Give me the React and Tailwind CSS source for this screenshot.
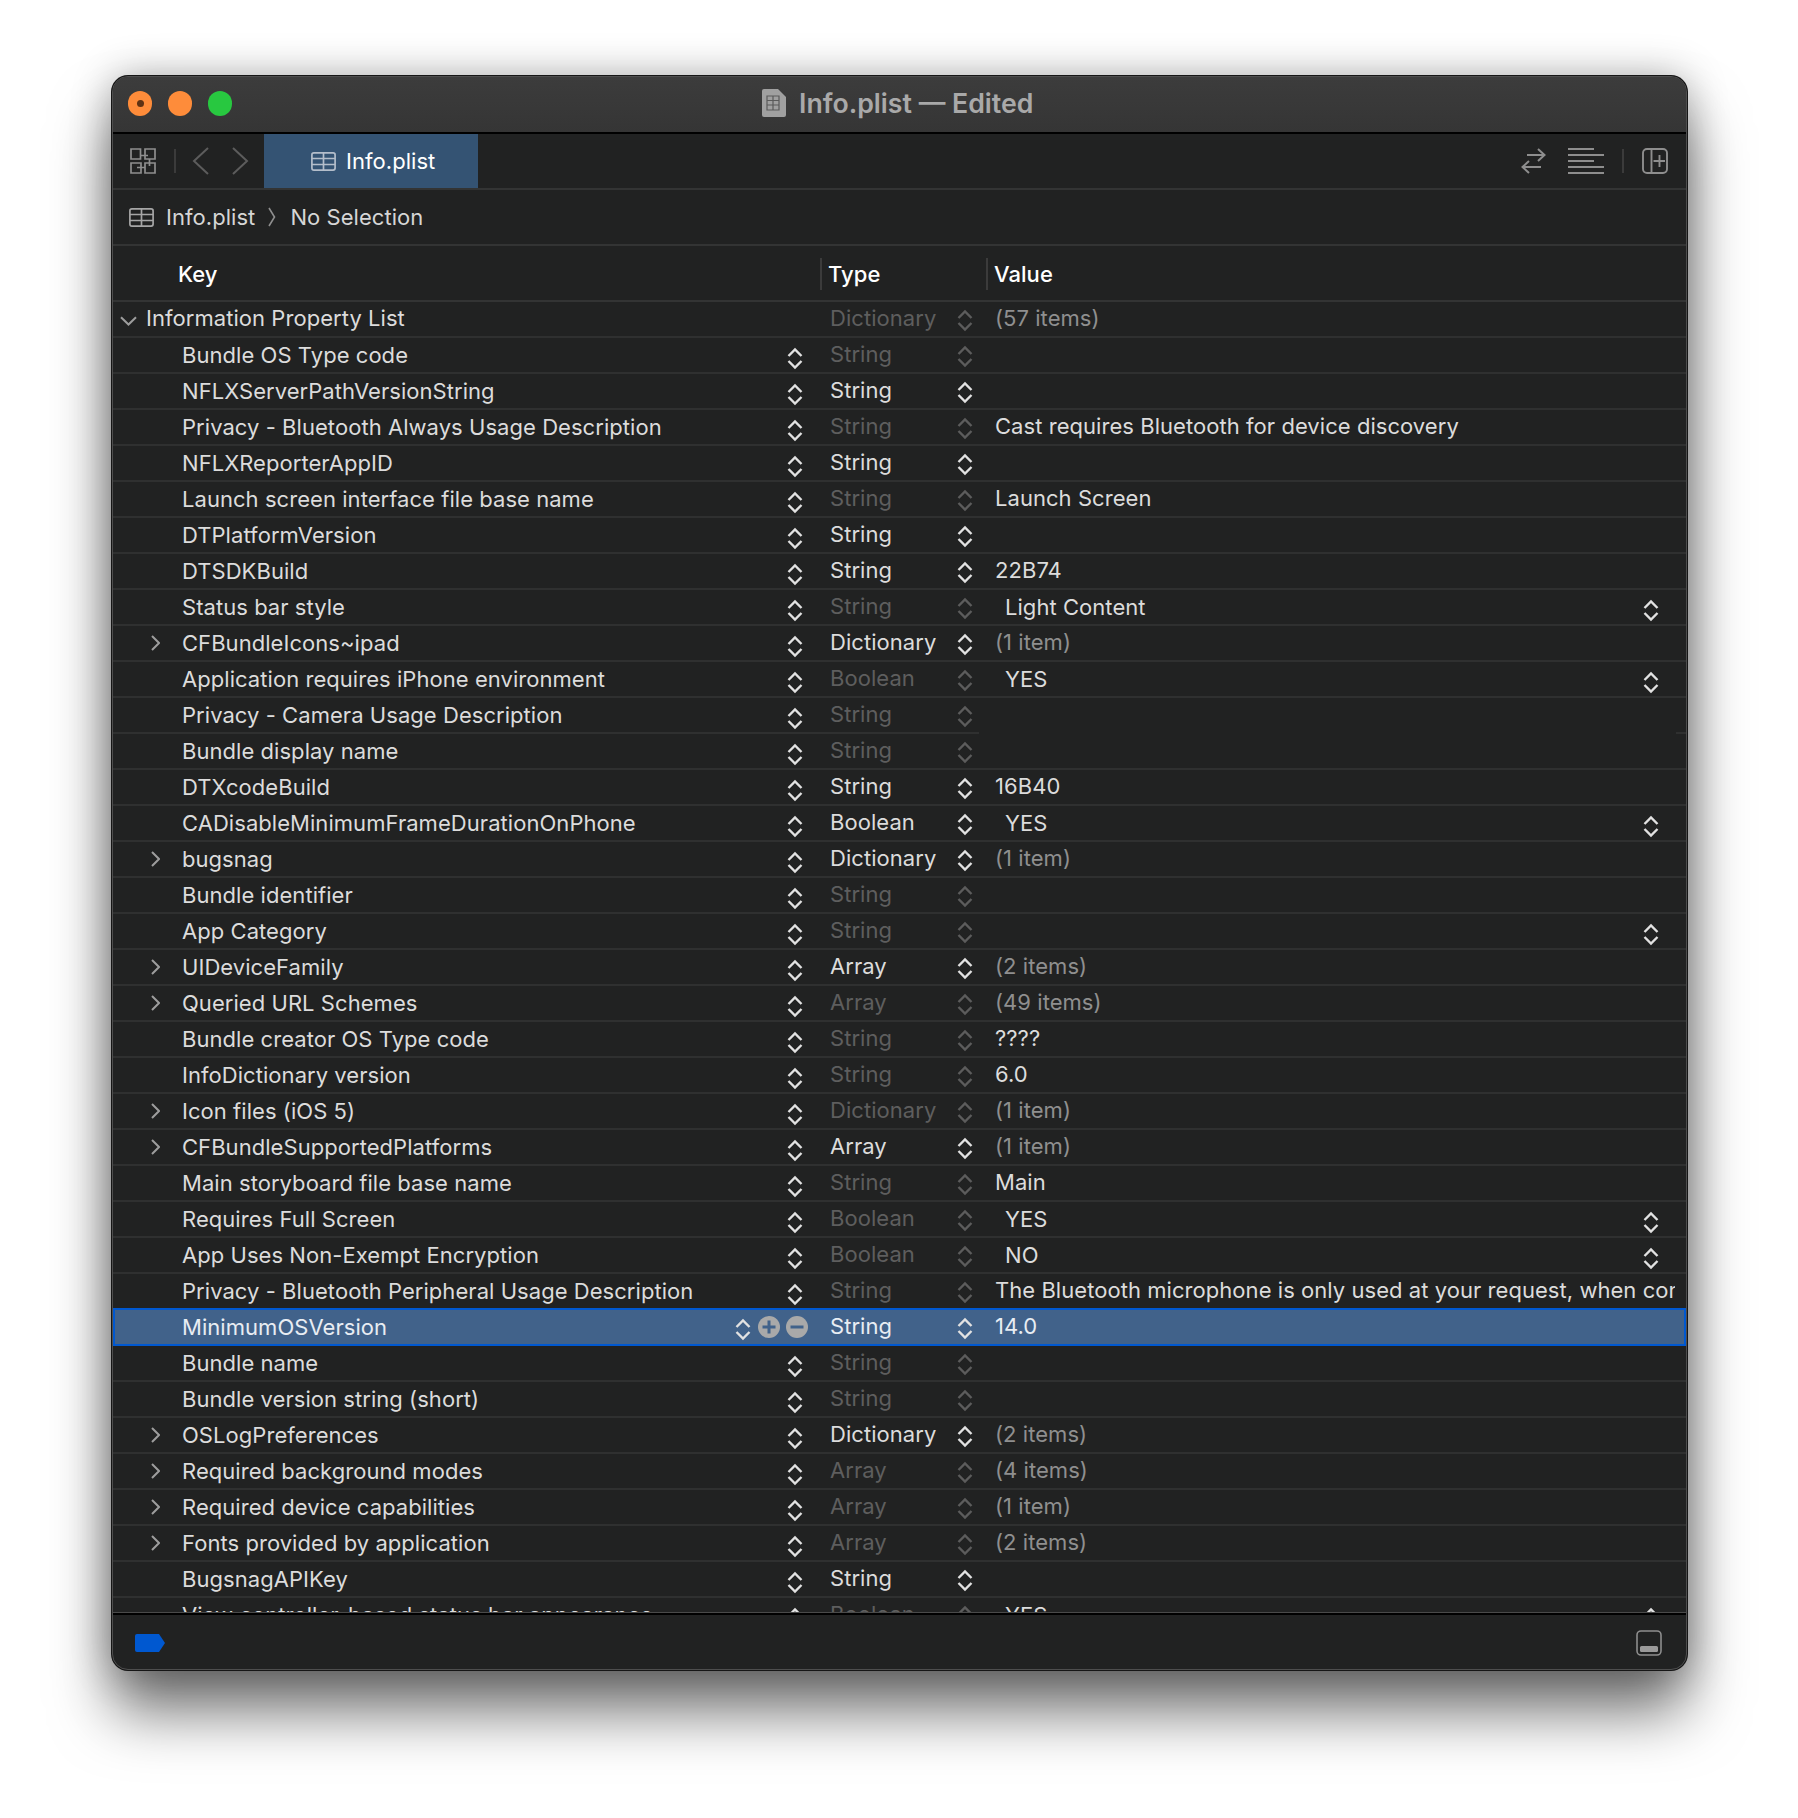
import React from "react";

const rows = [
  ["Information Property List", "Dictionary", 1, "(57 items)", "items", "root"],
  ["Bundle OS Type code", "String", 1],
  ["NFLXServerPathVersionString", "String", 0],
  ["Privacy - Bluetooth Always Usage Description", "String", 1, "Cast requires Bluetooth for device discovery"],
  ["NFLXReporterAppID", "String", 0],
  ["Launch screen interface file base name", "String", 1, "Launch Screen"],
  ["DTPlatformVersion", "String", 0],
  ["DTSDKBuild", "String", 0, "22B74"],
  ["Status bar style", "String", 1, "Light Content", "picker"],
  ["CFBundleIcons~ipad", "Dictionary", 0, "(1 item)", "items", "closed"],
  ["Application requires iPhone environment", "Boolean", 1, "YES", "picker"],
  ["Privacy - Camera Usage Description", "String", 1, "", "gap"],
  ["Bundle display name", "String", 1],
  ["DTXcodeBuild", "String", 0, "16B40"],
  ["CADisableMinimumFrameDurationOnPhone", "Boolean", 0, "YES", "picker"],
  ["bugsnag", "Dictionary", 0, "(1 item)", "items", "closed"],
  ["Bundle identifier", "String", 1],
  ["App Category", "String", 1, "", "picker"],
  ["UIDeviceFamily", "Array", 0, "(2 items)", "items", "closed"],
  ["Queried URL Schemes", "Array", 1, "(49 items)", "items", "closed"],
  ["Bundle creator OS Type code", "String", 1, "????"],
  ["InfoDictionary version", "String", 1, "6.0"],
  ["Icon files (iOS 5)", "Dictionary", 1, "(1 item)", "items", "closed"],
  ["CFBundleSupportedPlatforms", "Array", 0, "(1 item)", "items", "closed"],
  ["Main storyboard file base name", "String", 1, "Main"],
  ["Requires Full Screen", "Boolean", 1, "YES", "picker"],
  ["App Uses Non-Exempt Encryption", "Boolean", 1, "NO", "picker"],
  ["Privacy - Bluetooth Peripheral Usage Description", "String", 1, "The Bluetooth microphone is only used at your request, when connected to a device"],
  ["MinimumOSVersion", "String", 0, "14.0", "plain", "selected"],
  ["Bundle name", "String", 1],
  ["Bundle version string (short)", "String", 1],
  ["OSLogPreferences", "Dictionary", 0, "(2 items)", "items", "closed"],
  ["Required background modes", "Array", 1, "(4 items)", "items", "closed"],
  ["Required device capabilities", "Array", 1, "(1 item)", "items", "closed"],
  ["Fonts provided by application", "Array", 1, "(2 items)", "items", "closed"],
  ["BugsnagAPIKey", "String", 0],
  ["View controller-based status bar appearance", "Boolean", 1, "YES", "picker"],
];

function Stepper({ dim, className = "" }) {
  return (
    <svg width="16" height="23" viewBox="0 0 16 23" fill="none" stroke={dim ? "#5c5c5c" : "#e2e2e2"} strokeWidth="2.4" className={"shrink-0 " + className}>
      <path d="M1.5 9 L8 2.5 L14.5 9" />
      <path d="M1.5 14 L8 20.5 L14.5 14" />
    </svg>
  );
}

function TableIcon({ className = "", color = "#a6a6a6" }) {
  return (
    <svg width="25" height="19" viewBox="0 0 25 19" fill="none" stroke={color} strokeWidth="1.7" className={"shrink-0 " + className}>
      <rect x="0.9" y="0.9" width="23.2" height="17.2" rx="2" />
      <path d="M0.9 6.5 H24.1 M0.9 12.5 H24.1 M12.5 0.9 V18.1" />
    </svg>
  );
}

function Row({ r }) {
  const [key, type, dim, value, kind, mode] = r;
  const sel = mode === "selected";
  const gap = kind === "gap";
  const line = sel ? "" : "border-b-2 border-[#2f3030]";
  return (
    <div className={"flex shrink-0 " + (sel ? "h-[38px] -mt-[2px] border-2 border-[#0058d0] bg-[#41628a]" : "h-[36px]")}>
      <div className={"flex items-center shrink-0 " + (sel ? "w-[707px] " : "w-[709px] ") + line}>
        {mode === "root" ? (
          <div className="flex items-center pl-[7px] w-[33px] shrink-0">
            <svg width="17" height="10" viewBox="0 0 17 10" fill="none" stroke="#9d9d9d" strokeWidth="2" className="mt-[3px]">
              <path d="M1 1.2 L8.5 8.5 L16 1.2" />
            </svg>
          </div>
        ) : (
          <div className={"flex items-center justify-end pr-[22px] shrink-0 " + (sel ? "w-[67px]" : "w-[69px]")}>
            {mode === "closed" && (
              <svg width="9" height="16" viewBox="0 0 9 16" fill="none" stroke="#9d9d9d" strokeWidth="2">
                <path d="M1 1 L8 8 L1 15" />
              </svg>
            )}
          </div>
        )}
        <div className={"flex-1 whitespace-nowrap " + (mode === "root" ? "-mt-[2px] " : "") + (sel ? "text-[#e8edf3]" : "text-[#dcdcdc]")}>{key}</div>
        {sel ? (
          <div className="flex items-center pr-[14px]">
            <Stepper className="mt-[4px] mr-[7px]" />
            <svg width="22" height="22" viewBox="0 0 22 22" className="mr-[6px]">
              <circle cx="11" cy="11" r="11" fill="#a9a9a9" />
              <path d="M11 4.5 V17.5 M4.5 11 H17.5" stroke="#41628a" strokeWidth="3" />
            </svg>
            <svg width="22" height="22" viewBox="0 0 22 22">
              <circle cx="11" cy="11" r="11" fill="#a9a9a9" />
              <path d="M4.5 11 H17.5" stroke="#41628a" strokeWidth="3" />
            </svg>
          </div>
        ) : (
          mode !== "root" && <Stepper className="mt-[6px] mr-[19px]" />
        )}
      </div>
      <div className={"flex items-center shrink-0 pl-[8px] justify-between " + (gap ? "w-[157px] pr-[6px] " : "w-[166px] pr-[15px] ") + line}>
        <span className={"-mt-[2px] " + (dim ? "text-[#5e5e5e]" : sel ? "text-[#e8edf3]" : "text-[#dcdcdc]")}>{type}</span>
        <Stepper dim={dim} className="mt-[2px]" />
      </div>
      {gap ? (
        <div className="flex flex-1 justify-end items-end">
          <div className="w-[10px] h-[2px] bg-[#2f3030]" />
        </div>
      ) : (
        <div className={"flex items-center flex-1 min-w-0 pr-[11px] " + line}>
          <div className={"flex-1 min-w-0 overflow-hidden whitespace-nowrap " + (kind === "picker" ? "pl-[17px] " : "pl-[7px] -mt-[2px] ") + (kind === "items" ? "text-[#8f8f8f]" : sel ? "text-[#e8edf3]" : "text-[#dcdcdc]")}>
            {value}
          </div>
          {kind === "picker" && <Stepper className="mt-[6px] mr-[16px]" />}
        </div>
      )}
    </div>
  );
}

export default function App() {
  return (
    <div className="w-[1798px] h-[1818px] bg-white pl-[112px] pt-[76px] font-['Inter','Liberation_Sans',sans-serif] text-[22px] tracking-[0.05px] overflow-hidden">
      <div className="w-[1575px] h-[1594px] flex flex-col rounded-[16px] overflow-hidden border border-[#4e4e4e] bg-[#212222] shadow-[0_0_0_1px_#161616,0_42px_60px_rgba(0,0,0,0.55),0_0_40px_rgba(0,0,0,0.3)]">
        <div className="h-[55px] shrink-0 flex items-center relative bg-gradient-to-b from-[#3c3c3c] to-[#353535] border-b-2 border-black box-content">
          <div className="flex items-center gap-[16px] pl-[15px] -mt-[2px]">
            <div className="w-[24px] h-[25px] rounded-full bg-[#fe8c3a] flex items-center justify-center">
              <div className="w-[7px] h-[7px] rounded-full bg-[#5e3214]" />
            </div>
            <div className="w-[24px] h-[25px] rounded-full bg-[#fe8c3a]" />
            <div className="w-[24px] h-[25px] rounded-full bg-[#28c840]" />
          </div>
          <div className="absolute left-[649px] top-[6px] flex items-center gap-[13px]">
            <svg width="24" height="28" viewBox="0 0 24 28">
              <path d="M2 0 H16 L24 8 V26 a2 2 0 0 1 -2 2 H2 a2 2 0 0 1 -2 -2 V2 a2 2 0 0 1 2 -2 Z" fill="#a0a0a0" />
              <path d="M5 7 H17 V21 H5 Z M5 11.5 H17 M5 16 H17 M11 7 V21" fill="none" stroke="#5a5a5a" strokeWidth="1.2" />
            </svg>
            <span className="text-[#a9a9a9] font-semibold text-[26.7px] tracking-normal whitespace-nowrap">Info.plist — Edited</span>
          </div>
        </div>

        <div className="h-[56px] shrink-0 flex items-center border-b-2 border-[#333434] bg-[#212222]">
          <svg width="26" height="26" viewBox="0 0 26 26" fill="none" stroke="#8e8e8e" strokeWidth="1.7" className="ml-[17px]">
            <path d="M1 1 H10.5 V11 H1 Z M15 1 H25 V11 H15 Z M1 15 H11 V25 H1 Z M15 15 H25 V25 H15 Z" />
            <path d="M10.5 7.5 H18 M19.5 11 V18 M7 19.5 H15" />
          </svg>
          <div className="w-[2px] h-[24px] bg-[#3b3b3b] ml-[18px]" />
          <svg width="17" height="28" viewBox="0 0 17 28" fill="none" stroke="#5c5c5c" strokeWidth="2" className="ml-[16px]">
            <path d="M16 1 L2 14 L16 27" />
          </svg>
          <svg width="17" height="28" viewBox="0 0 17 28" fill="none" stroke="#5c5c5c" strokeWidth="2" className="ml-[23px]">
            <path d="M1 1 L15 14 L1 27" />
          </svg>
          <div className="w-[214px] h-[54px] self-start ml-[15px] bg-[#345373] flex items-center text-white pl-[47px] gap-[10px]">
            <TableIcon color="#b4becb" />
            <span>Info.plist</span>
          </div>
          <div className="ml-auto flex items-center pr-[18px]">
            <svg width="25" height="28" viewBox="0 0 25 28" fill="none" stroke="#8e8e8e" strokeWidth="2">
              <path d="M6 8 H23.5 M17 2 L23.5 8 L17 14" />
              <path d="M20 20 H1.5 M8 14 L1.5 20 L8 26" />
            </svg>
            <svg width="36" height="26" viewBox="0 0 36 26" fill="none" stroke="#8e8e8e" strokeWidth="2" className="ml-[22px]">
              <path d="M0 1 H26 M0 7 H36 M0 13 H26 M0 19 H36 M0 25 H36" />
            </svg>
            <div className="w-[2px] h-[24px] bg-[#3b3b3b] ml-[18px]" />
            <svg width="26" height="26" viewBox="0 0 26 26" fill="none" stroke="#8e8e8e" strokeWidth="1.9" className="ml-[18px]">
              <rect x="1" y="1" width="24" height="24" rx="4" />
              <path d="M9.5 1 V25 M17.5 7 V19 M11.5 13 H23" />
            </svg>
          </div>
        </div>

        <div className="h-[56px] shrink-0 flex items-center border-b-2 border-[#333434] text-[#d6d6d6]">
          <TableIcon className="ml-[16px]" color="#a6a6a6" />
          <span className="ml-[12px]">Info.plist</span>
          <svg width="8" height="20" viewBox="0 0 8 20" fill="none" stroke="#8e8e8e" strokeWidth="1.6" className="ml-[13px]">
            <path d="M1 1 L6.5 10 L1 19" />
          </svg>
          <span className="ml-[14px]">No Selection</span>
        </div>

        <div className="flex-1 min-h-0 overflow-hidden flex flex-col">
          <div className="h-[56px] shrink-0 flex items-center border-b-2 border-[#333434] text-white font-medium">
            <div className="w-[707px] shrink-0 pl-[65px] pt-[3px]">Key</div>
            <div className="w-[166px] shrink-0 h-[32px] mt-[1px] flex items-center border-l-2 border-[#3b3b3b] pl-[6px] pt-[2px]">Type</div>
            <div className="flex-1 h-[32px] mt-[1px] flex items-center border-l-2 border-[#3b3b3b] pl-[6px] pt-[2px]">Value</div>
          </div>
          {rows.map((r, i) => (
            <Row key={i} r={r} />
          ))}
        </div>

        <div className="h-[57px] shrink-0 border-t border-[#4a4a4a]">
          <div className="h-full border-t-2 border-black flex items-center justify-between pl-[22px] pr-[24px] pt-[2px]">
            <svg width="30" height="18" viewBox="0 0 30 18">
              <path d="M2 0 H24 L30 9 L24 18 H2 a2 2 0 0 1 -2 -2 V2 a2 2 0 0 1 2 -2 Z" fill="#0058d0" />
            </svg>
            <svg width="26" height="26" viewBox="0 0 26 26" fill="none">
              <rect x="1" y="1" width="24" height="24" rx="4" stroke="#8e8e8e" strokeWidth="1.6" />
              <rect x="4" y="16" width="18" height="6" rx="1.5" fill="#9a9a9a" />
            </svg>
          </div>
        </div>
      </div>
    </div>
  );
}
